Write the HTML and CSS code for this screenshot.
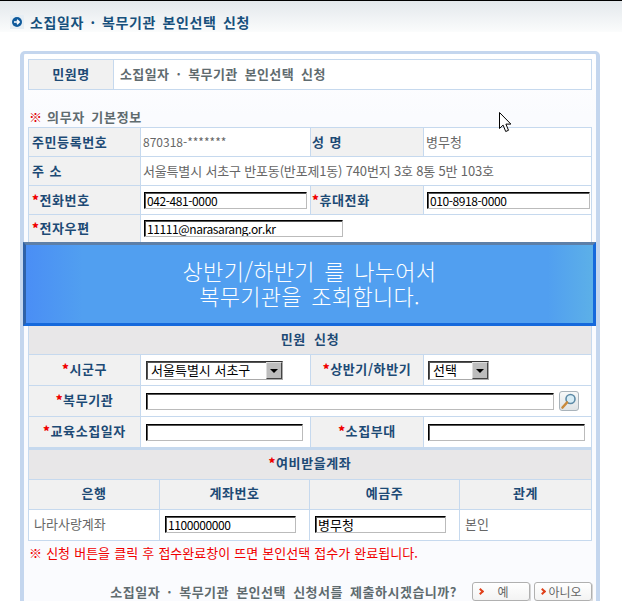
FILE: index.html
```html
<!DOCTYPE html>
<html lang="ko">
<head>
<meta charset="utf-8">
<title>소집일자 · 복무기관 본인선택 신청</title>
<link rel="stylesheet" href="styles.css">
</head>
<body>
<header class="top">
  <svg class="bullet" width="14" height="14" viewBox="0 0 14 14"><rect width="14" height="14" fill="#e6eef4"/><circle cx="7" cy="7" r="5" fill="#0f5a9c"/><path d="M4 7h5M7 4.800l2.200 2.200L7 9.200" fill="none" stroke="#fff" stroke-width="1.500"/></svg>
  <h1 class="title">소집일자 · 복무기관 본인선택 신청</h1>
</header>
<main class="panel">
  <table class="grid name-table">
    <tr><th class="c-name">민원명</th><td class="strong-text">소집일자 · 복무기관 본인선택 신청</td></tr>
  </table>
  <h2 class="section"><span class="mark">※</span> 의무자 기본정보</h2>
  <table class="grid info">
    <colgroup><col class="w112"><col class="w170"><col class="w113"><col></colgroup>
    <tr><th class="left">주민등록번호</th><td class="small">870318-*******</td><th class="left col3 wide">성 명</th><td>병무청</td></tr>
    <tr><th class="left wide">주 소</th><td colspan="3" class="addr">서울특별시 서초구 반포동(반포제1동) 740번지 3호 8통 5반 103호</td></tr>
    <tr><th class="left"><b class="req">*</b>전화번호</th><td><input class="field f163" value="042-481-0000"></td><th class="left col3"><b class="req">*</b>휴대전화</th><td><input class="field f163" value="010-8918-0000"></td></tr>
    <tr class="last"><th class="left"><b class="req">*</b>전자우편</th><td colspan="3"><input class="field f199" value="11111@narasarang.or.kr"></td></tr>
  </table>
  <div class="banner"><p>상반기/하반기 를 나누어서<br>복무기관을 조회합니다.</p></div>
  <table class="grid apply">
    <colgroup><col class="w112"><col class="w170"><col class="w113"><col></colgroup>
    <tr class="head"><th colspan="4">민원 신청</th></tr>
    <tr><th><b class="req">*</b>시군구</th><td class="pad">
      <span class="select s137"><span>서울특별시 서초구</span><i class="arrow"></i></span></td>
      <th><b class="req">*</b>상반기/하반기</th><td class="pad4">
      <span class="select s61"><span>선택</span><i class="arrow"></i></span></td></tr>
    <tr><th><b class="req">*</b>복무기관</th><td colspan="3" class="pad"><div class="search"><input class="field grow"><button class="find" type="button" aria-label="찾기"><svg width="18" height="18" viewBox="0 0 18 18"><circle cx="10.500" cy="7" r="4.500" fill="#d7ecf5" stroke="#5d8aa6" stroke-width="1.600"/><path d="M7 10.500 2.500 15.500" stroke="#c98a3c" stroke-width="2.600" stroke-linecap="round"/></svg></button></div></td></tr>
    <tr><th><b class="req">*</b>교육소집일자</th><td class="pad"><input class="field f157"></td><th><b class="req">*</b>소집부대</th><td class="pad4"><input class="field f157"></td></tr>
  </table>
  <table class="grid bank">
    <colgroup><col class="w131"><col class="w150"><col class="w150"><col></colgroup>
    <tr class="head"><th colspan="4"><b class="req">*</b>여비받을계좌</th></tr>
    <tr class="sub"><th>은행</th><th>계좌번호</th><th>예금주</th><th>관계</th></tr>
    <tr><td>나라사랑계좌</td><td class="pad"><input class="field f131" value="1100000000"></td><td class="pad"><input class="field f131 ko" value="병무청"></td><td>본인</td></tr>
  </table>
  <p class="note">※ 신청 버튼을 클릭 후 접수완료창이 뜨면 본인선택 접수가 완료됩니다.</p>
  <div class="confirm">
    <span class="ask">소집일자 · 복무기관 본인선택 신청서를 제출하시겠습니까?</span>
    <button class="btn" type="button">예</button>
    <button class="btn" type="button">아니오</button>
  </div>
</main>
<svg class="cursor" width="12" height="21" viewBox="0 0 12 21"><path d="M.5.500v16l3.600-3.400 2.600 6.400 2.800-1.200-2.600-6.200h5z" fill="#fff" stroke="#000"/></svg>
</body>
</html>
```
FILE: styles.css
```css
* { box-sizing: border-box; }
html, body { margin: 0; padding: 0; }
body {
  position: relative;
  width: 622px;
  height: 601px;
  overflow: hidden;
  background: #fff;
  font-family: "Noto Sans CJK KR", "Liberation Sans", sans-serif;
  font-size: 13px;
  color: #666;
}
.top {
  display: flex;
  align-items: center;
  gap: 6px;
  height: 32px;
  padding: 10px 0 0 10px;
  border-top: 1px solid #000;
  background: linear-gradient(#e3e8ec, #fbfcfc);
}
.bullet { flex: none; }
.title {
  margin: 0;
  font-size: 14px;
  font-weight: 700;
  color: #17507c;
  line-height: 16px;
  letter-spacing: .6px;
  word-spacing: 2px;
}
.panel {
  width: 580px;
  height: 570px;
  margin: 19px 0 0 20px;
  padding: 5px 4px 0;
  border: solid #c4d6ee;
  border-width: 3px 4px 0;
  border-radius: 5px 5px 0 0;
  background: linear-gradient(#fff, #fafbfe 60px, #fafbfe);
}
.grid {
  width: 564px;
  table-layout: fixed;
  border-collapse: collapse;
  background: #fff;
}
.grid th, .grid td {
  border: 1px solid #c6d9ee;
  padding: 0 0 0 2px;
  height: 29px;
  font-weight: 400;
  line-height: 14px;
  text-align: left;
}
.grid th {
  background: #f1f1f1;
  color: #1d4a75;
  font-weight: 700;
  text-align: center;
  padding: 0 0 2px;
  letter-spacing: .6px;
}
.grid th.left { text-align: left; padding: 0 0 0 3px; }
.grid th.col3 { padding-left: 1px; }
.grid th.wide { word-spacing: 2px; letter-spacing: 0; }
.w112 { width: 112px; }
.w170 { width: 170px; }
.w113 { width: 113px; }
.w131 { width: 131px; }
.w150 { width: 150px; }
.name-table th, .name-table td { height: 30px; padding-bottom: 2px; }
.c-name { width: 85px; }
.grid .strong-text {
  padding-left: 6px;
  font-weight: 700;
  color: #5f6b6f;
  letter-spacing: .4px;
  word-spacing: 3px;
}
.section {
  margin: 19px 0 2px 1px;
  height: 16px;
  font-size: 13px;
  font-weight: 700;
  line-height: 16px;
  color: #5f6b6f;
  letter-spacing: .7px;
  word-spacing: 2px;
}
.mark { margin-right: -2px; font-size: 13px; color: #e00000; font-weight: 900; }
.small { font-size: 12px; }
.addr { letter-spacing: -.17px; }
.req { color: #f00000; }
.field {
  display: inline-block;
  vertical-align: middle;
  height: 17px;
  padding: 0 0 0 2px;
  border: 1px solid;
  border-color: #000 #bbb #bbb #000;
  box-shadow: inset 1px 1px 0 #555;
  background: #fff;
  font: 12px/14px "Noto Sans CJK KR", "Liberation Sans", sans-serif;
  color: #000;
  letter-spacing: -.4px;
  outline: none;
}
.ko { font-size: 13px; letter-spacing: 0; }
.f163 { width: 163px; margin-left: 1px; }
.f199 { width: 199px; margin-left: 1px; }
.f157 { width: 157px; }
.f131 { width: 131px; }
.info tr.last th, .info tr.last td { height: 27px; border-bottom: 0; }
.banner {
  width: 573px;
  height: 84px;
  margin-left: -5px;
  padding-bottom: 1px;
  position: relative;
  display: flex;
  align-items: center;
  justify-content: center;
  border: 3px solid;
  border-color: #5d7fa8 #1569dc #1569dc #2f62a8;
  background: linear-gradient(90deg, #4a8ef5, #519ff0 10%, #519ff0 92%, #5cb0e8);
}
.banner p {
  margin: 0;
  color: #fff;
  font-size: 22px;
  font-weight: 300;
  line-height: 25px;
  letter-spacing: .3px;
  word-spacing: 3px;
  text-align: center;
}
.apply th, .apply td { height: 31px; }
.apply tr.head th { height: 29px; border-top: 0; background: #e8e7e8; word-spacing: 4px; }
.grid .pad { padding-left: 5px; }
.grid .pad4 { padding-left: 4px; }
.select {
  display: inline-flex;
  align-items: center;
  justify-content: space-between;
  vertical-align: middle;
  height: 19px;
  padding-left: 4px;
  border: 1px solid #aaa;
  border-top-color: #333;
  border-left-color: #333;
  box-shadow: inset 1px 1px 0 #555;
  background: #fff;
  color: #000;
}
.s137 { width: 137px; }
.s61 { width: 61px; }
.arrow {
  position: relative;
  width: 16px;
  height: 17px;
  background: #bdbdbd;
  border: 1px solid;
  border-color: #ddd #444 #444 #ddd;
}
.arrow::after {
  content: "";
  position: absolute;
  left: 3px;
  top: 6px;
  border: 4px solid transparent;
  border-top: 4px solid #000;
  border-bottom: 0;
}
.search { display: flex; align-items: center; gap: 5px; }
.grow { width: 408px; flex: none; }
.find {
  width: 20px;
  height: 20px;
  padding: 0;
  display: flex;
  align-items: center;
  justify-content: center;
  border: 1px solid #a9b3ba;
  border-radius: 3px;
  background: linear-gradient(#f7f8f8, #dfe3e5);
}
.bank th, .bank td { height: 30px; }
.bank tr.head th { background: #e8e7e8; border-top: 2px solid #c6d9ee; }
.bank td:first-child, .bank td:last-child { padding-left: 5px; padding-bottom: 2px; }
.bank tr:last-child td { height: 31px; }
.note {
  margin: 5px 0 0 1px;
  height: 14px;
  line-height: 14px;
  color: #f00000;
  word-spacing: .5px;
}
.confirm {
  display: flex;
  align-items: center;
  justify-content: flex-end;
  gap: 4px;
  margin-top: 22px;
  height: 19px;
}
.ask {
  margin-right: 11px;
  font-weight: 700;
  color: #5f6b6f;
  letter-spacing: .5px;
  word-spacing: 3px;
}
.btn {
  position: relative;
  width: 58px;
  height: 19px;
  padding: 0 0 0 4px;
  border: 1px solid #b0b0b0;
  border-radius: 3px;
  box-shadow: 1px 1px 0 #d5d5d5;
  background: linear-gradient(#fff, #f3f3f3);
  font: 12px/15px "Noto Sans CJK KR", sans-serif;
  color: #666;
}
.btn::before {
  content: "";
  position: absolute;
  left: 5px;
  top: 6px;
  width: 3px;
  height: 3px;
  border: solid #e0401a;
  border-width: 2px 2px 0 0;
  transform: rotate(45deg);
}
.cursor { position: absolute; left: 499px; top: 112px; }
```
